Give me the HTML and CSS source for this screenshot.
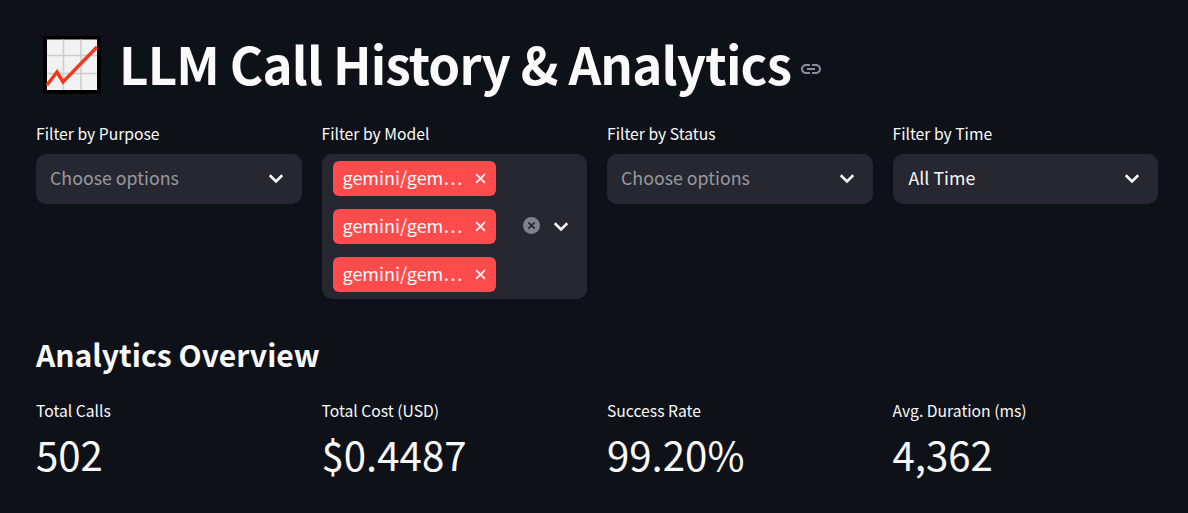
FILE: index.html
```html
<!DOCTYPE html>
<html lang="en">
<head>
    <meta charset="UTF-8">
    <meta name="viewport" content="width=device-width, initial-scale=1.0">
    <title>LLM Call History &amp; Analytics</title>
    <link rel="stylesheet" href="styles.css">
</head>
<body>
    <div class="main-container">
        <h1 class="page-title">
            <svg class="chart-emoji" viewBox="0 0 58 58" aria-hidden="true">
                <rect width="58" height="58" fill="#000"/>
                <rect x="4" y="3.500" width="50" height="50.500" fill="#f2f2f2"/>
                <path d="M20.500 3.500V54M38 3.500V54M4 19.500H54M4 37.500H54" stroke="#ccc" stroke-width="1.500" fill="none"/>
                <path d="M4 49L14 36L20 46L54 11" stroke="#f0391f" stroke-width="3.500" fill="none"/>
            </svg>
            <span class="title-text">LLM Call History &amp; Analytics</span>
            <svg class="link-icon" viewBox="0 0 24 24" aria-hidden="true">
                <path d="M17 7h-4v2h4c1.650 0 3 1.350 3 3s-1.350 3-3 3h-4v2h4c2.760 0 5-2.240 5-5s-2.240-5-5-5zm-6 8H7c-1.650 0-3-1.350-3-3s1.350-3 3-3h4V7H7c-2.760 0-5 2.240-5 5s2.240 5 5 5h4v-2zm-3-4h8v2H8z"/>
            </svg>
        </h1>

        <div class="filter-row">
            <div class="filter">
                <label>Filter by Purpose</label>
                <div class="select-box">
                    <span class="placeholder">Choose options</span>
                    <svg class="chevron" viewBox="0 0 16 16"><path d="M3 5l5 5 5-5"/></svg>
                </div>
            </div>
            <div class="filter">
                <label>Filter by Model</label>
                <div class="select-box multi">
                    <div class="tags">
                        <span class="tag"><span class="tag-text">gemini/gem…</span><svg class="tag-x" viewBox="0 0 10 10"><path d="M1 1l8 8M9 1l-8 8"/></svg></span>
                        <span class="tag"><span class="tag-text">gemini/gem…</span><svg class="tag-x" viewBox="0 0 10 10"><path d="M1 1l8 8M9 1l-8 8"/></svg></span>
                        <span class="tag"><span class="tag-text">gemini/gem…</span><svg class="tag-x" viewBox="0 0 10 10"><path d="M1 1l8 8M9 1l-8 8"/></svg></span>
                    </div>
                    <svg class="clear-icon" viewBox="0 0 16 16">
                        <circle cx="8" cy="8" r="8" fill="#7f818e"/>
                        <path d="M5 5l6 6M11 5l-6 6" stroke="#262730" stroke-width="1.500"/>
                    </svg>
                    <svg class="chevron" viewBox="0 0 16 16"><path d="M3 5l5 5 5-5"/></svg>
                </div>
            </div>
            <div class="filter">
                <label>Filter by Status</label>
                <div class="select-box">
                    <span class="placeholder">Choose options</span>
                    <svg class="chevron" viewBox="0 0 16 16"><path d="M3 5l5 5 5-5"/></svg>
                </div>
            </div>
            <div class="filter">
                <label>Filter by Time</label>
                <div class="select-box">
                    <span class="value">All Time</span>
                    <svg class="chevron" viewBox="0 0 16 16"><path d="M3 5l5 5 5-5"/></svg>
                </div>
            </div>
        </div>

        <h2 class="section-title">Analytics Overview</h2>

        <div class="metric-row">
            <div class="metric"><div class="metric-label">Total Calls</div><div class="metric-value">502</div></div>
            <div class="metric"><div class="metric-label">Total Cost (USD)</div><div class="metric-value">$0.4487</div></div>
            <div class="metric"><div class="metric-label">Success Rate</div><div class="metric-value">99.20%</div></div>
            <div class="metric"><div class="metric-label">Avg. Duration (ms)</div><div class="metric-value">4,362</div></div>
        </div>
    </div>
</body>
</html>
```

FILE: styles.css
```css
html, body {
    height: 100%;
}
body {
    margin: 0;
    overflow: hidden;
    font-family: "Noto Sans CJK SC", "Noto Sans", sans-serif;
    background-color: #0e1117;
    color: #fafafa;
}
.main-container {
    padding: 36px 30px 0 36px;
}
.page-title {
    display: flex;
    align-items: center;
    margin: 0 0 27px 7px;
    height: 58px;
    font-size: 51px;
    font-weight: 700;
    line-height: 58px;
    letter-spacing: -0.82px;
    white-space: nowrap;
}
.title-text {
    margin-top: -4px;
}
.chart-emoji {
    width: 58px;
    height: 58px;
    margin-right: 18px;
    flex-shrink: 0;
}
.link-icon {
    width: 24px;
    height: 24px;
    margin: 8px 0 0 8px;
    fill: #8b8d97;
}
.filter-row, .metric-row {
    display: grid;
    grid-template-columns: repeat(4, 1fr);
    column-gap: 20px;
}
.filter-row {
    align-items: start;
}
label {
    display: block;
    font-size: 15.700px;
    line-height: 26px;
    height: 24px;
    margin-bottom: 9px;
}
.select-box {
    display: flex;
    align-items: center;
    min-height: 50px;
    box-sizing: border-box;
    padding: 0 16px 0 14px;
    background-color: #262730;
    border-radius: 10px;
    font-size: 17.800px;
    line-height: 24px;
}
.select-box .placeholder {
    flex: 1;
    margin-bottom: 4px;
    color: #96989f;
}
.select-box .value {
    flex: 1;
    margin: 0 0 4px 2px;
}
.chevron {
    width: 20px;
    height: 20px;
    fill: none;
    stroke: #fafafa;
    stroke-width: 2;
    flex-shrink: 0;
}
.select-box.multi {
    padding: 7px 16px 7px 11px;
}
.tags {
    flex: 1;
    display: flex;
    flex-direction: column;
    align-items: flex-start;
    gap: 13px;
}
.tag {
    display: flex;
    align-items: center;
    height: 35px;
    width: 163px;
    box-sizing: border-box;
    padding: 0 10px;
    background-color: #ff4b4b;
    border-radius: 6px;
    font-size: 18px;
}
.tag-text {
    flex: 1;
    margin-bottom: 4px;
}
.tag-x {
    width: 11px;
    height: 11px;
    fill: none;
    stroke: #fafafa;
    stroke-width: 1.500;
}
.clear-icon {
    width: 17px;
    height: 17px;
    margin: 0 11px 2px 0;
    flex-shrink: 0;
}
.section-title {
    margin: 33px 0 22px;
    font-size: 30.100px;
    font-weight: 600;
    line-height: 44px;
}
.metric-label {
    font-size: 15.700px;
    line-height: 26px;
}
.metric-value {
    font-size: 40.200px;
    line-height: 60px;
}
```
